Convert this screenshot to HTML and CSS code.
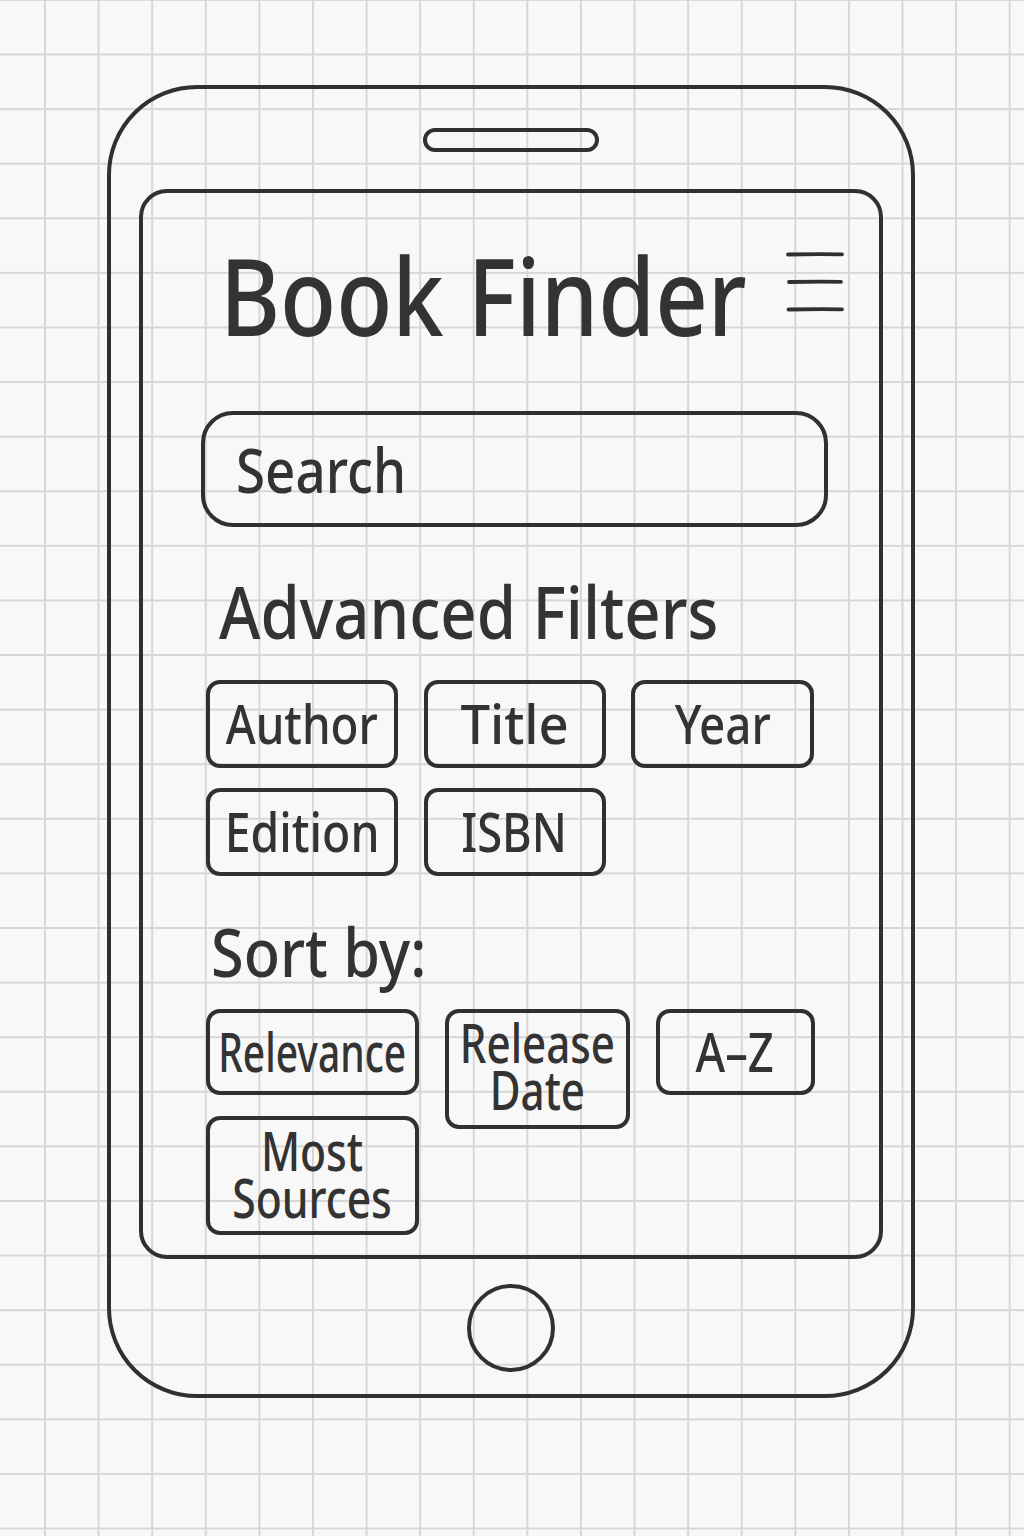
FILE: index.html
```html
<!DOCTYPE html>
<html lang="en">
<head>
<meta charset="utf-8">
<title>Book Finder wireframe</title>
<link rel="stylesheet" href="styles.css">
</head>
<body>
<div class="phone">
  <div class="speaker"></div>
  <div class="screen">
    <header class="app-header">
      <h1 class="app-title"><span class="label sq-title">Book Finder</span></h1>
      <svg class="menu-icon" width="58" height="60" viewBox="0 0 58 60" aria-hidden="true">
        <path d="M2 2.5 Q28 1.8 56 2.3" />
        <path d="M3 30 Q28 29.5 55 29.8" />
        <path d="M2.5 57.5 Q28 57 56 57.3" />
      </svg>
    </header>
    <div class="search"><span class="label search-label sq-search">Search</span></div>
    <h2 class="section-title filters-title"><span class="label sq-filters">Advanced Filters</span></h2>
    <div class="chip-grid filters">
      <div class="chip"><span class="label sq-85">Author</span></div>
      <div class="chip"><span class="label sq-97">Title</span></div>
      <div class="chip"><span class="label sq-85">Year</span></div>
      <div class="chip"><span class="label sq-86">Edition</span></div>
      <div class="chip"><span class="label sq-84">ISBN</span></div>
    </div>
    <h2 class="section-title sort-title"><span class="label sq-sort">Sort by:</span></h2>
    <div class="chip-grid sort">
      <div class="chip"><span class="label sq-72">Relevance</span></div>
      <div class="chip chip-tall">
        <span class="label stack sq-78"><span class="line">Release</span><span class="line">Date</span></span>
      </div>
      <div class="chip"><span class="label sq-84">A–Z</span></div>
      <div class="chip chip-tall-2">
        <span class="label stack sq-79"><span class="line">Most</span><span class="line">Sources</span></span>
      </div>
    </div>
  </div>
  <div class="home-button"></div>
</div>
</body>
</html>
```
FILE: styles.css
```css
html {
  background-color: #f8f8f8;
  background-image:
    linear-gradient(to right, #d7d7d7 1.5px, transparent 1.5px),
    linear-gradient(to bottom, #d7d7d7 1.5px, transparent 1.5px);
  background-size: 53.6px 54.6px;
  background-position: 44px 53.5px;
  min-height: 1536px;
}

body {
  margin: 0;
  min-height: 1536px;
  font-family: "Noto Sans", "Open Sans", "DejaVu Sans", sans-serif;
  font-weight: 500;
  color: #333;
}

.phone {
  box-sizing: border-box;
  width: 808px;
  height: 1313px;
  margin: 84.5px 0 0 106.5px;
  border: 4px solid #303030;
  border-radius: 90px;
  padding-top: 39px;
  display: flex;
  flex-direction: column;
  align-items: center;
}

.speaker {
  box-sizing: border-box;
  width: 176px;
  height: 24px;
  border: 4px solid #303030;
  border-radius: 12px;
  flex: none;
}

.screen {
  box-sizing: border-box;
  width: 744px;
  height: 1070px;
  margin-top: 37px;
  border: 4px solid #303030;
  border-radius: 28px;
  padding: 48.5px 51px 0 58.5px;
  display: flex;
  flex-direction: column;
  flex: none;
}

.home-button {
  box-sizing: border-box;
  width: 88px;
  height: 88px;
  margin-top: 25px;
  border: 4px solid #303030;
  border-radius: 50%;
  flex: none;
}

.label {
  display: inline-block;
  white-space: nowrap;
}

.stack .line {
  display: block;
  height: 47px;
  line-height: 47px;
}

.sq-title { transform: scaleX(0.858); }
.sq-search { transform: scaleX(0.853); }
.sq-filters { transform: scaleX(0.868); }
.sq-sort { transform: scaleX(0.873); }
.sq-72 { transform: scaleX(0.722); }
.sq-78 { transform: scaleX(0.78); }
.sq-79 { transform: scaleX(0.79); }
.sq-84 { transform: scaleX(0.839); }
.sq-85 { transform: scaleX(0.848); }
.sq-86 { transform: scaleX(0.858); }
.sq-97 { transform: scaleX(0.975); }

.app-header {
  display: flex;
  align-items: flex-start;
  height: 107px;
}

.app-title {
  flex: none;
  width: 540px;
  margin: 0 0 0 19px;
  font-size: 107px;
  line-height: 107px;
  font-weight: 500;
}

.app-title .label,
.search-label,
.section-title .label {
  transform-origin: left center;
}

.menu-icon {
  margin: 11px -16px 0 auto;
  fill: none;
  stroke: #303030;
  stroke-width: 3.8;
  stroke-linecap: round;
  flex: none;
}

.search {
  box-sizing: border-box;
  height: 116px;
  margin-top: 63px;
  border: 4px solid #303030;
  border-radius: 32px;
  padding-left: 31px;
  display: flex;
  align-items: center;
}

.search-label {
  font-size: 62px;
}

.section-title {
  margin: 0;
  font-weight: 500;
}

.filters-title {
  margin-top: 47px;
  margin-left: 18px;
  font-size: 73px;
  line-height: 73px;
}

.sort-title {
  margin-top: 41px;
  margin-left: 10px;
  font-size: 68px;
  line-height: 68px;
}

.chip-grid {
  display: grid;
  margin-left: 4.5px;
}

.filters {
  margin-top: 33px;
  grid-template-columns: 192.5px 182px 183px;
  grid-auto-rows: 87.5px;
  column-gap: 25.5px;
  row-gap: 20.5px;
}

.sort {
  margin-top: 24px;
  grid-template-columns: 213px 185px 159px;
  grid-template-rows: 86.5px 119px;
  column-gap: 26px;
  row-gap: 21px;
}

.chip {
  box-sizing: border-box;
  border: 4px solid #303030;
  border-radius: 14px;
  display: flex;
  align-items: center;
  justify-content: center;
  text-align: center;
  font-size: 54px;
  line-height: 47px;
  min-width: 0;
}

.chip .label {
  transform-origin: center center;
}

.chip-tall {
  grid-column: 2;
  grid-row: 1 / span 2;
  align-self: start;
  height: 120px;
  padding-bottom: 6px;
}

.chip-tall-2 {
  padding-bottom: 4px;
}
```
